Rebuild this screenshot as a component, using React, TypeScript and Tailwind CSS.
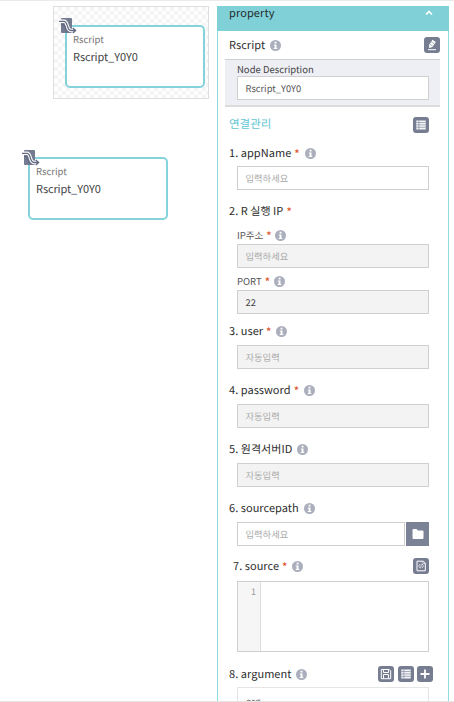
import React from "react";

const INPUT = "box-border flex h-6 items-center border border-[#cfcfcf] pl-[7.5px] pt-px text-[9.3px]";

function Info({ className = "" }: { className?: string }) {
  return (
    <svg className={`h-[11px] w-[11px] shrink-0 ${className}`} viewBox="0 0 11 11">
      <circle cx="5.5" cy="5.5" r="5.5" fill="#abaebc" />
      <path d="M4.6 1.8h1.9v1.6H4.6zM3.8 4.4h2.7v3.5h.8v1.1H3.7V7.9h.9V5.4h-.8z" fill="#fff" />
    </svg>
  );
}

function Star() {
  return <span className="ml-[3px] mt-[2px] text-[11px] font-medium leading-4 text-[#e0562c]">*</span>;
}

function IconButton({ children }: { children: React.ReactNode }) {
  return (
    <span className="flex h-4 w-4 shrink-0 items-center justify-center rounded-[3px] bg-[#777d91]">
      <svg className="h-4 w-4" viewBox="0 0 16 16" fill="none">
        {children}
      </svg>
    </span>
  );
}

function ListIcon() {
  return (
    <>
      <path d="M3.3 3.5h9.4v9H3.3z" fill="#f4f5f8" />
      <path d="M3.3 5.5h9.4M3.3 7.9h9.4M3.3 10.3h9.4M5.9 3.5v9" stroke="#858b9d" strokeWidth=".7" />
    </>
  );
}

function Label({ text, required, info = true, className = "" }: { text: string; required?: boolean; info?: boolean; className?: string }) {
  return (
    <div className={`flex items-center whitespace-nowrap pl-[11px] text-[11px] leading-5 tracking-[0.04px] text-[#2c2c2c] ${className}`}>
      <span>{text}</span>
      {required && <Star />}
      {info && <Info className="ml-[5px] mt-px" />}
    </div>
  );
}

function NodeCard() {
  return (
    <div className="relative h-[63px] w-[140px] rounded-[5px] border-2 border-[#84d3dc] bg-white pl-[6px] pt-[5px]">
      <div className="text-[9.5px] leading-[15px] text-[#777]">Rscript</div>
      <div className="mt-px text-[11px] leading-[18px] tracking-[-0.1px] text-[#444]">Rscript_Y0Y0</div>
      <svg className="absolute -left-[9px] -top-[10px] h-[18px] w-[19px]" viewBox="0 0 19 18" fill="none">
        <rect x="3" y="1" width="11" height="15" rx="1" fill="#747b91" />
        <path d="M1 4.3h5c4.5 0 2 9.2 7 9.2h4" stroke="#fff" strokeWidth="3.4" />
        <path d="M1 4.3h5c4.5 0 2 9.2 7 9.2h4M3 7.3h1.5c3 0 2 5 4.5 7.5" stroke="#626a80" strokeWidth="1.3" />
        <path d="m14.8 11 2.7 2.5-2.7 2.5" stroke="#626a80" strokeWidth="1.5" />
      </svg>
    </div>
  );
}

export default function App() {
  return (
    <div className="flex h-[702px] w-[454px] flex-col overflow-hidden border-b border-[#e4e4e4] bg-white font-['Noto_Sans_CJK_KR','Noto_Sans',sans-serif] [text-rendering:geometricPrecision]">
      <div className="h-px shrink-0 bg-[#ebebeb]" />
      <div className="flex min-h-0 flex-1 pt-[5px]">
        <div className="w-[217px] shrink-0">
          <div className="ml-[53px] h-[93px] w-[156px] border border-[#dcdce3] bg-[conic-gradient(#f4f4f4_25%,#fff_0_50%,#f4f4f4_0_75%,#fff_0)] bg-[length:8px_8px] pl-[11px] pt-[18px]">
            <NodeCard />
          </div>
          <div className="ml-[28px] mt-[58px]">
            <NodeCard />
          </div>
        </div>

        <div className="flex w-[232px] shrink-0 flex-col border-x border-[#8fdbe1]">
          <div className="-mx-px flex h-[25px] shrink-0 justify-between bg-[#80d0d8] pl-3 pr-[16px] text-[11px] leading-[14px] tracking-[0.1px] text-[#252a2c]">
            <span>property</span>
            <svg className="mt-[3px] h-[7px] w-[8px]" viewBox="0 0 8 7" fill="none">
              <path d="m1 5.5 3-3 3 3" stroke="#fff" strokeWidth="1.7" />
            </svg>
          </div>

          <div className="flex h-7 shrink-0 items-center justify-between pb-px pr-2">
            <Label text="Rscript" />
            <IconButton>
              <path d="M5.2 7.7 8.5 2.8l3.3 2.2-3.3 5-3.5.9z" fill="#fff" />
              <path d="m7.3 4.9 3 2M6 7.3l2.7 1.8" stroke="#8b90a1" strokeWidth=".7" />
              <path d="M4 12.7h8" stroke="#fff" strokeWidth="1" />
            </IconButton>
          </div>

          <div className="ml-[7px] mr-2 h-12 shrink-0 border-b-2 border-t border-b-[#dcdcdd] border-t-[#cfcfd1] bg-[#eeeff4] pl-3 pr-[11px]">
            <div className="h-4 pt-[2px] text-[9.5px] leading-[15px] text-[#444]">Node Description</div>
            <div className={`${INPUT} bg-white text-[#555]`}>Rscript_Y0Y0</div>
          </div>

          <div className="flex h-[35px] shrink-0 items-center justify-between pl-[11px] pr-[19px]">
            <span className="pt-px text-[11.5px] text-[#62c6d2]">연결관리</span>
            <IconButton><ListIcon /></IconButton>
          </div>

          <Label text="1. appName" required className="h-[21px] shrink-0" />
          <div className={`${INPUT} mx-[19px] mt-[3px] shrink-0 text-[#aaa]`}>입력하세요</div>

          <Label text="2. R 실행 IP" required info={false} className="mt-[10px] h-[21px] shrink-0" />
          <div className="ml-[19px] mt-[6px] flex h-4 shrink-0 items-center text-[9.5px] text-[#555]">
            IP주소<Star /><Info className="ml-[3px]" />
          </div>
          <div className={`${INPUT} mx-[19px] mt-px shrink-0 bg-[#f3f3f3] text-[#aaa]`}>입력하세요</div>
          <div className="ml-[19px] mt-[5px] flex h-4 shrink-0 items-center text-[9.5px] text-[#555]">
            PORT<Star /><Info className="ml-[4px]" />
          </div>
          <div className={`${INPUT} mx-[19px] mt-px shrink-0 bg-[#f3f3f3] text-[#444]`}>22</div>

          <Label text="3. user" required className="mt-[7px] h-5 shrink-0" />
          <div className={`${INPUT} mx-[19px] mt-1 shrink-0 bg-[#f3f3f3] text-[#aaa]`}>자동입력</div>
          <Label text="4. password" required className="mt-[11px] h-5 shrink-0" />
          <div className={`${INPUT} mx-[19px] mt-1 shrink-0 bg-[#f3f3f3] text-[#aaa]`}>자동입력</div>
          <Label text="5. 원격서버ID" className="mt-[11px] h-5 shrink-0" />
          <div className={`${INPUT} mx-[19px] mt-1 shrink-0 bg-[#f3f3f3] text-[#aaa]`}>자동입력</div>
          <Label text="6. sourcepath" className="mt-[11px] h-5 shrink-0" />
          <div className="mx-[19px] mt-1 flex h-6 shrink-0 gap-px">
            <div className={`${INPUT} flex-1 text-[#aaa]`}>입력하세요</div>
            <div className="flex w-[23px] items-center justify-center bg-[#7c8296]">
              <svg className="h-[10px] w-3" viewBox="0 0 12 10">
                <path d="M.5 1Q.5 0 1.5 0h3L6 1.5h4.5q1 0 1 1V9q0 1-1 1h-9q-1 0-1-1z" fill="#fff" />
              </svg>
            </div>
          </div>

          <div className="mt-[10px] flex h-5 shrink-0 items-center justify-between pl-1 pr-[19px]">
            <Label text="7. source" required />
            <IconButton>
              <path d="M4 3.2h6.2L12.3 5v7.8H4z" stroke="#fff" strokeWidth="1" />
              <path d="M9.8 3.2v2.2h2.5M7 6 5.7 8 7 10M9.2 6l1.3 2-1.3 2M8.4 5.8l-.8 4.6" stroke="#e4e6ed" strokeWidth=".8" />
            </IconButton>
          </div>
          <div className="mx-[19px] mt-[5px] flex h-[71px] shrink-0 border border-[#cfcfcf]">
            <div className="w-[23px] border-r border-[#ddd] bg-[#f6f6f6] pr-1 pt-[3px] text-right text-[9px] leading-[14px] text-[#999]">1</div>
          </div>

          <div className="mt-3 flex h-5 shrink-0 items-center justify-between pr-[15px]">
            <Label text="8. argument" />
            <div className="flex gap-[3.5px]">
              <IconButton>
                <path d="M3.3 3.5h8l1.4 1.4v7.8H3.3z" stroke="#fff" strokeWidth="1" />
                <path d="M5.5 3.5v3h5v-3M5.5 12.5v-4h5v4" stroke="#fff" strokeWidth="1" />
              </IconButton>
              <IconButton><ListIcon /></IconButton>
              <IconButton>
                <path d="M8 3.5v9M3.5 8h9" stroke="#fff" strokeWidth="1.8" />
              </IconButton>
            </div>
          </div>
          <div className="mx-[19px] mt-[3px] h-10 shrink-0 border border-[#e5e5e5] pl-2 pt-[6px] text-[9.5px] leading-[14px] text-[#555]">arg</div>
        </div>
      </div>
    </div>
  );
}
